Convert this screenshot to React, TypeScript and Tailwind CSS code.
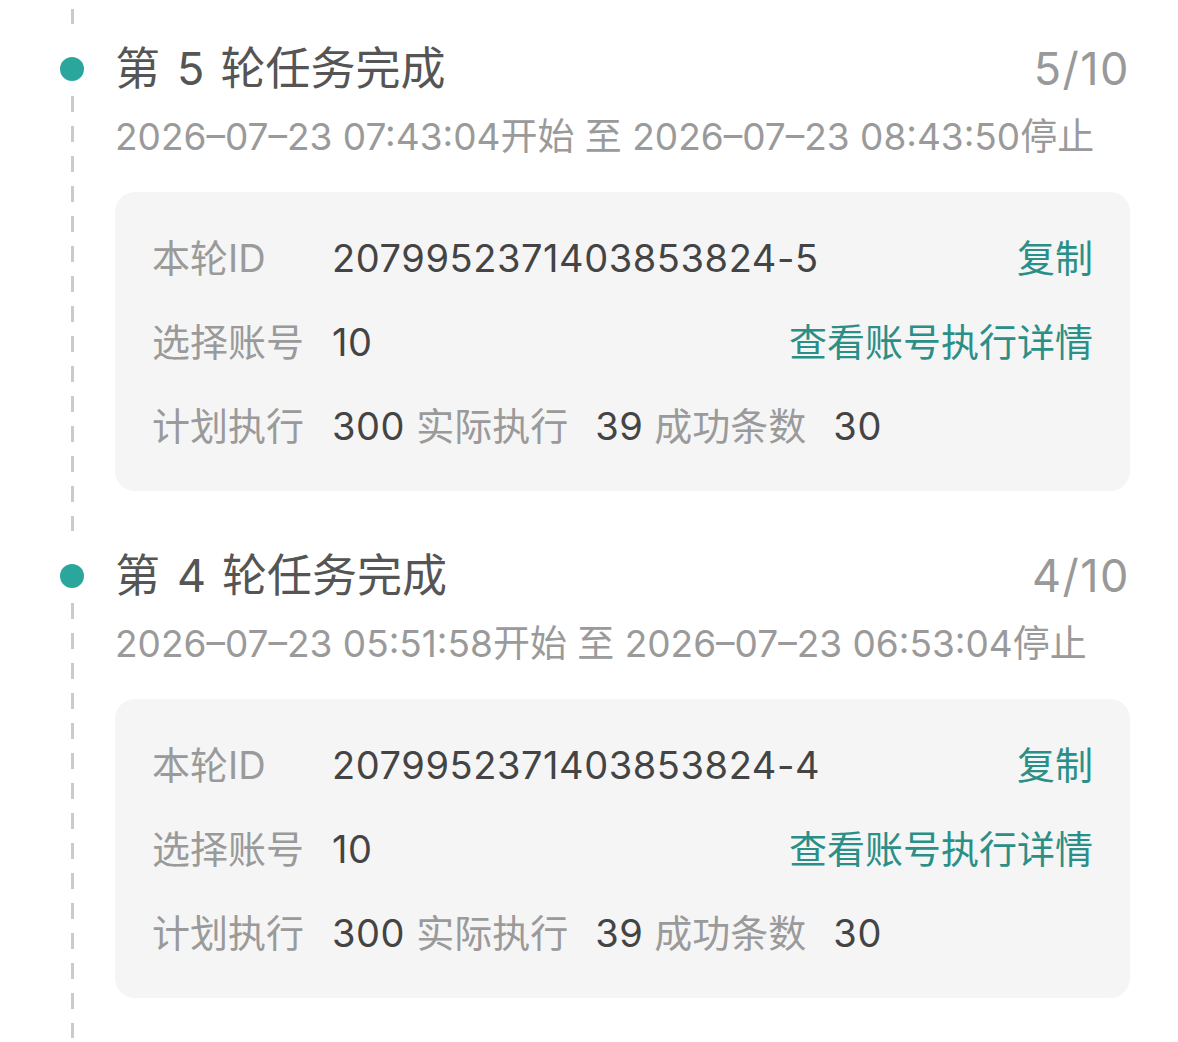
import React from 'react';

type Round = {
  no: number;
  total: number;
  start: string;
  end: string;
  id: string;
  accounts: number;
  planned: number;
  actual: number;
  success: number;
};

const rounds: Round[] = [
  {
    no: 5,
    total: 10,
    start: '2026–07–23 07:43:04',
    end: '2026–07–23 08:43:50',
    id: '2079952371403853824-5',
    accounts: 10,
    planned: 300,
    actual: 39,
    success: 30,
  },
  {
    no: 4,
    total: 10,
    start: '2026–07–23 05:51:58',
    end: '2026–07–23 06:53:04',
    id: '2079952371403853824-4',
    accounts: 10,
    planned: 300,
    actual: 39,
    success: 30,
  },
];

const dash =
  'w-[3px] bg-[image:repeating-linear-gradient(to_bottom,#cbcbcb_0px,#cbcbcb_16px,transparent_16px,transparent_30px)]';

function RoundItem({ r }: { r: Round }) {
  return (
    <div className="flex">
      {/* timeline rail */}
      <div className="ml-[60px] w-[24px] flex flex-col items-center">
        <div className="pt-[16px]">
          <div className="w-[24px] h-[24px] rounded-full bg-[#2aa69c]" />
        </div>
        <div className={`${dash} flex-1 mt-[15px] mb-[17px] h-[435px]`} />
      </div>

      <div className="ml-[31px] mr-[48px] flex-1 pb-[57px]">
        <div className="h-[56px] flex items-center justify-between">
          <span className="text-[45px] text-[#555555] flex">
            <span>第</span>
            <span className="ml-[17px] mr-[16px]">{r.no}</span>
            <span>轮任务完成</span>
          </span>
          <span className="text-[45px] tracking-[1.5px] text-[#999999]">
            {r.no}/{r.total}
          </span>
        </div>
        <div className="mt-[18px] h-[44px] flex items-center text-[37px] text-[#9a9a9a] whitespace-pre">
          {r.start}开始 至 {r.end}停止
        </div>

        <div className="mt-[33px] rounded-[20px] bg-[#f5f5f5] px-[37px] pt-[38px] pb-[37px] flex flex-col gap-[28px] text-[38px]">
          <div className="h-[56px] flex items-center justify-between">
            <div className="flex items-center">
              <span className="w-[180px] text-[#9a9a9a]">本轮ID</span>
              <span className="text-[#444444] tracking-[0.57px]">{r.id}</span>
            </div>
            <span className="text-[#2b8f87]">复制</span>
          </div>
          <div className="h-[56px] flex items-center justify-between">
            <div className="flex items-center">
              <span className="w-[180px] text-[#9a9a9a]">选择账号</span>
              <span className="text-[#444444] tracking-[0.57px]">{r.accounts}</span>
            </div>
            <span className="text-[#2b8f87]">查看账号执行详情</span>
          </div>
          <div className="h-[56px] flex items-center">
            <span className="w-[180px] text-[#9a9a9a]">计划执行</span>
            <span className="text-[#444444] tracking-[0.57px] mr-[11px]">{r.planned}</span>
            <span className="text-[#9a9a9a] mr-[27px]">实际执行</span>
            <span className="text-[#444444] tracking-[0.57px] mr-[11px]">{r.actual}</span>
            <span className="text-[#9a9a9a] mr-[27px]">成功条数</span>
            <span className="text-[#444444] tracking-[0.57px]">{r.success}</span>
          </div>
        </div>
      </div>
    </div>
  );
}

export default function App() {
  return (
    <div
      className="bg-white w-[1178px] h-[1042px] overflow-hidden"
      style={{ fontFamily: 'Inter, "Noto Sans CJK SC", sans-serif' }}
    >
      {/* tail of the previous round's rail */}
      <div className="h-[41px] ml-[60px] w-[24px] flex justify-center">
        <div className="mt-[9px] h-[15px] w-[3px] bg-[#cbcbcb]" />
      </div>
      {rounds.map((r) => (
        <RoundItem key={r.no} r={r} />
      ))}
    </div>
  );
}
